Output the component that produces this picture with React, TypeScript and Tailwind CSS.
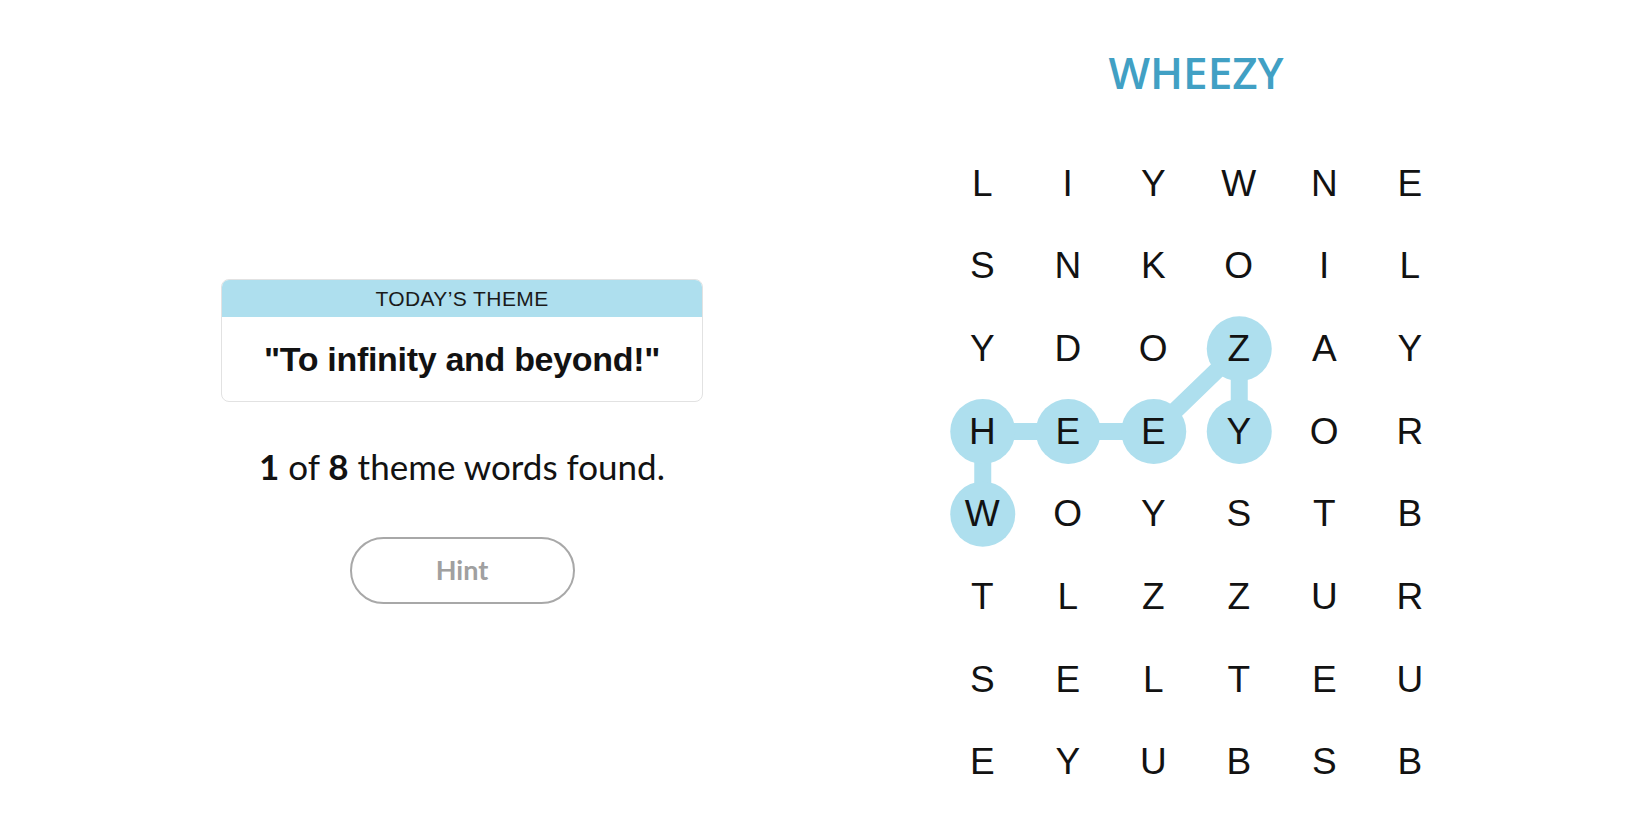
const GRID = [
  "LIYWNE",
  "SNKOIL",
  "YDOZAY",
  "HEEYOR",
  "WOYSTB",
  "TLZZUR",
  "SELTEU",
  "EYUBSB",
];

const CELL_W = 85.5;
const CELL_H = 82.7;

// found word path: W-H-E-E-Z-Y as [row, col]
const PATH: [number, number][] = [
  [4, 0],
  [3, 0],
  [3, 1],
  [3, 2],
  [2, 3],
  [3, 3],
];

const center = ([r, c]: [number, number]) => ({
  x: c * CELL_W + CELL_W / 2,
  y: r * CELL_H + CELL_H / 2,
});

const PathOverlay = () => {
  const pts = PATH.map(center);
  return (
    <svg
      className="absolute inset-0 pointer-events-none"
      width={CELL_W * 6}
      height={CELL_H * 8}
    >
      <polyline
        points={pts.map((p) => `${p.x},${p.y}`).join(" ")}
        fill="none"
        stroke="#aedfee"
        strokeWidth={17}
        strokeLinejoin="round"
      />
      {pts.map((p, i) => (
        <circle key={i} cx={p.x} cy={p.y} r={32.5} fill="#aedfee" />
      ))}
    </svg>
  );
};

const Board = () => (
  <div className="relative w-[513px]">
    <PathOverlay />
    <div className="relative grid grid-cols-6">
      {GRID.flatMap((row, r) =>
        row.split("").map((ch, c) => (
          <div
            key={`${r}-${c}`}
            className="flex h-[82.7px] w-[85.5px] items-center justify-center text-[37px] text-[#121212] font-['Liberation_Sans',Arial,sans-serif]"
          >
            {ch}
          </div>
        ))
      )}
    </div>
  </div>
);

export default function App() {
  return (
    <div className="flex h-[825px] w-[1650px] bg-white text-[#121212]">
      <div className="flex w-[924px] flex-col items-center pt-[279px]">
        <div className="w-[482px] overflow-hidden rounded-[8px] border border-[#e2e2e2]">
          <div className="flex h-[37px] items-center justify-center bg-[#aedfee] text-[21px] tracking-[0.4px] text-[#1a1a1a] font-['Liberation_Sans',Arial,sans-serif]">
            TODAY’S THEME
          </div>
          <div className="flex h-[84px] items-center justify-center text-[34px] font-bold tracking-[-0.3px] font-['Liberation_Sans',Arial,sans-serif]">
            "To infinity and beyond!"
          </div>
        </div>
        <p className="mt-[44px] text-[35px] leading-[40px] font-['Lato',sans-serif]">
          <b>1</b> of <b>8</b> theme words found.
        </p>
        <button className="mt-[51px] flex h-[67px] w-[225px] items-center justify-center rounded-full border-2 border-[#a8a8a8] text-[27px] font-bold text-[#a0a0a0] font-['Lato',sans-serif]">
          Hint
        </button>
      </div>
      <div className="flex w-[544px] flex-col items-center">
        <h1 className="mt-[46px] text-[44px] leading-[52px] font-semibold text-[#41a0c4] font-['Open_Sans',sans-serif]">
          WHEEZY
        </h1>
        <div className="mt-[44px]">
          <Board />
        </div>
      </div>
    </div>
  );
}
